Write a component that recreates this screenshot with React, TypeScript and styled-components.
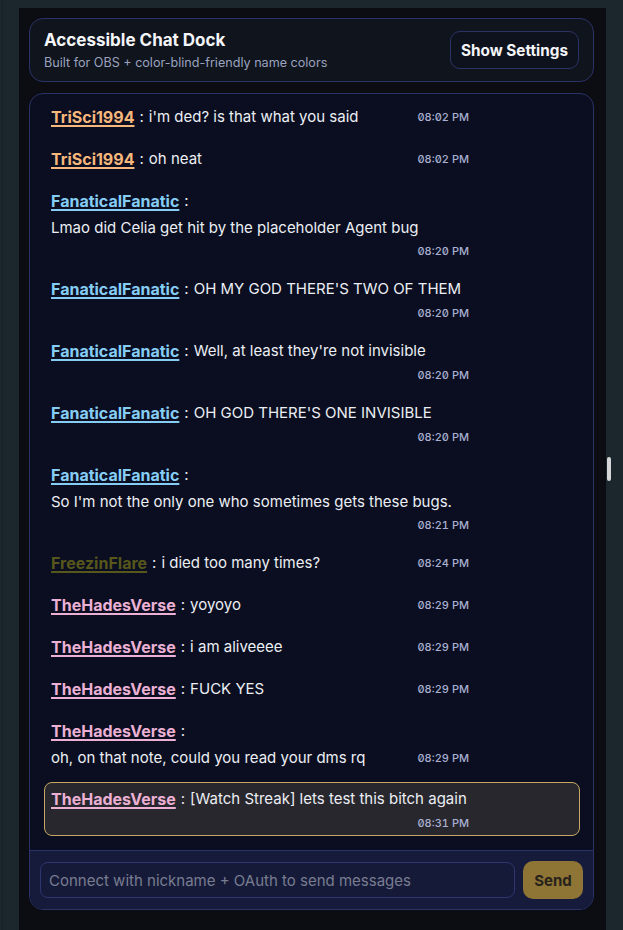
import styled, { createGlobalStyle } from "styled-components";

const GlobalStyle = createGlobalStyle`
  html, body {
    margin: 0;
    padding: 0;
    background: #1b262d;
    font-family: Inter, "Noto Sans", sans-serif;
  }
  * { box-sizing: border-box; }
`;

type Msg = {
  user: string;
  color: string;
  text: string;
  time: string;
  highlight?: boolean;
};

const TRI = "#f6b77d";
const FAN = "#86cdf5";
const FRZ = "#57561b";
const HAD = "#ebb0d3";

const messages: Msg[] = [
  { user: "TriSci1994", color: TRI, text: "i'm ded? is that what you said", time: "08:02 PM" },
  { user: "TriSci1994", color: TRI, text: "oh neat", time: "08:02 PM" },
  { user: "FanaticalFanatic", color: FAN, text: "Lmao did Celia get hit by the placeholder Agent bug", time: "08:20 PM" },
  { user: "FanaticalFanatic", color: FAN, text: "OH MY GOD THERE'S TWO OF THEM", time: "08:20 PM" },
  { user: "FanaticalFanatic", color: FAN, text: "Well, at least they're not invisible", time: "08:20 PM" },
  { user: "FanaticalFanatic", color: FAN, text: "OH GOD THERE'S ONE INVISIBLE", time: "08:20 PM" },
  { user: "FanaticalFanatic", color: FAN, text: "So I'm not the only one who sometimes gets these bugs.", time: "08:21 PM" },
  { user: "FreezinFlare", color: FRZ, text: "i died too many times?", time: "08:24 PM" },
  { user: "TheHadesVerse", color: HAD, text: "yoyoyo", time: "08:29 PM" },
  { user: "TheHadesVerse", color: HAD, text: "i am aliveeee", time: "08:29 PM" },
  { user: "TheHadesVerse", color: HAD, text: "FUCK YES", time: "08:29 PM" },
  { user: "TheHadesVerse", color: HAD, text: "oh, on that note, could you read your dms rq", time: "08:29 PM" },
  { user: "TheHadesVerse", color: HAD, text: "[Watch Streak] lets test this bitch again", time: "08:31 PM", highlight: true },
];

export default function App() {
  return (
    <>
      <GlobalStyle />
      <Page>
        <Dock>
          <Header>
            <HeaderText>
              <Title>Accessible Chat Dock</Title>
              <Subtitle>Built for OBS + color-blind-friendly name colors</Subtitle>
            </HeaderText>
            <SettingsButton>Show Settings</SettingsButton>
          </Header>

          <ChatCard>
            <MessageList>
              {messages.map((m, i) => (
                <Row key={i} $highlight={m.highlight}>
                  <Name $color={m.color}>{m.user}</Name>
                  <Sep>:</Sep>
                  <Text>{m.text}</Text>
                  <Time>{m.time}</Time>
                </Row>
              ))}
            </MessageList>
            <Composer>
              <Input placeholder="Connect with nickname + OAuth to send messages" />
              <SendButton>Send</SendButton>
            </Composer>
          </ChatCard>
        </Dock>
        <ScrollThumb />
      </Page>
    </>
  );
}

const Page = styled.div`
  position: relative;
  min-height: 100vh;
  padding: 8px 17px 0 16px;
  margin-left: 2px;
  border-left: 1px solid #16212a;
  display: flex;
`;

const Dock = styled.div`
  flex: 1;
  background: #0c0d13;
  padding: 10px 12px 20px 10px;
  display: flex;
  flex-direction: column;
  gap: 11px;
`;

const Header = styled.div`
  display: flex;
  align-items: center;
  justify-content: space-between;
  background: #10141d;
  border: 1px solid #2b3366;
  border-radius: 14px;
  padding: 10px 14px 10px 14px;
`;

const HeaderText = styled.div`
  display: flex;
  flex-direction: column;
  gap: 4px;
`;

const Title = styled.div`
  font-weight: 700;
  font-size: 17px;
  line-height: 22px;
  color: #f4f5f8;
`;

const Subtitle = styled.div`
  font-size: 12.6px;
  line-height: 16px;
  color: #9aa2bf;
`;

const SettingsButton = styled.button`
  height: 38px;
  padding: 0 8px;
  width: 129px;
  background: #0e121c;
  border: 1px solid #2b3366;
  border-radius: 10px;
  color: #f4f5f8;
  font-family: Inter, "Noto Sans", sans-serif;
  font-weight: 700;
  font-size: 15.3px;
`;

const ChatCard = styled.div`
  border: 1px solid #2b3366;
  border-radius: 14px;
  overflow: hidden;
  background: #0a0e20;
  display: flex;
  flex-direction: column;
`;

const MessageList = styled.div`
  display: flex;
  flex-direction: column;
  gap: 8px;
  padding: 6px 13px 14px 14px;
`;

const Row = styled.div<{ $highlight?: boolean }>`
  display: flex;
  flex-wrap: wrap;
  align-items: center;
  column-gap: 5px;
  row-gap: 4px;
  padding: 4px 100px 4px 6px;
  border: 1px solid ${(p) => (p.$highlight ? "#c7a862" : "transparent")};
  border-radius: 8px;
  background: ${(p) => (p.$highlight ? "#28272e" : "transparent")};
`;

const Name = styled.span<{ $color: string }>`
  font-weight: 700;
  font-size: 16px;
  line-height: 24px;
  color: ${(p) => p.$color};
  text-decoration: underline;
  text-decoration-thickness: 2px;
  text-underline-offset: 2px;
`;

const Sep = styled.span`
  font-size: 15px;
  line-height: 24px;
  color: #e6e8f0;
`;

const Text = styled.span`
  font-size: 15px;
  line-height: 22px;
  color: #eceef4;
`;

const Time = styled.span`
  margin-left: auto;
  margin-right: 10px;
  font-feature-settings: "zero" 1, "tnum" 1;
  font-size: 11px;
  font-weight: 500;
  line-height: 16px;
  color: #a8b0d2;
`;

const Composer = styled.div`
  display: flex;
  align-items: center;
  gap: 8px;
  padding: 10px;
  background: #161b3b;
  border-top: 1px solid #2b3366;
`;

const Input = styled.input`
  flex: 1;
  height: 36px;
  padding: 0 8px;
  background: #161a39;
  border: 1px solid #2e3670;
  border-radius: 8px;
  color: #e6e8f0;
  font-family: Inter, "Noto Sans", sans-serif;
  font-size: 15px;
  outline: none;

  &::placeholder {
    color: #787d90;
  }
`;

const SendButton = styled.button`
  width: 60px;
  height: 38px;
  border: none;
  border-radius: 10px;
  background: #8e7535;
  color: #27221a;
  font-family: Inter, "Noto Sans", sans-serif;
  font-weight: 700;
  font-size: 15px;
`;

const ScrollThumb = styled.div`
  position: absolute;
  left: 604px;
  top: 457px;
  width: 4px;
  height: 24px;
  border-radius: 2px;
  background: #d6d6d6;
`;
